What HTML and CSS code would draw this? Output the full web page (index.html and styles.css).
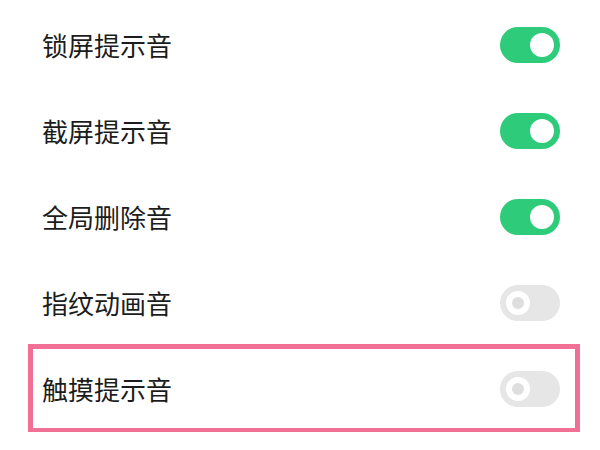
FILE: index.html
```html
<!DOCTYPE html>
<html lang="zh-CN">
<head>
<meta charset="utf-8">
<link rel="stylesheet" href="styles.css">
</head>
<body>
<div class="list">
  <div class="row"><span class="label">锁屏提示音</span><span class="switch on"><span class="knob"></span></span></div>
  <div class="row"><span class="label">截屏提示音</span><span class="switch on"><span class="knob"></span></span></div>
  <div class="row"><span class="label">全局删除音</span><span class="switch on"><span class="knob"></span></span></div>
  <div class="row"><span class="label">指纹动画音</span><span class="switch off"><span class="knob"></span></span></div>
  <div class="row highlight"><span class="label">触摸提示音</span><span class="switch off"><span class="knob"></span></span></div>
</div>
</body>
</html>
```

FILE: styles.css
```css
html, body {
  margin: 0;
  padding: 0;
  background: #ffffff;
}
.list {
  padding: 2px 20px 0 28px;
  display: flex;
  flex-direction: column;
}
.row {
  height: 86px;
  padding: 0 20px 0 14px;
  display: flex;
  align-items: center;
  justify-content: space-between;
  position: relative;
}
.label {
  font-family: "Noto Sans CJK SC", "Noto Sans", sans-serif;
  font-size: 26px;
  color: #1c1c1c;
  line-height: 1;
}
.switch {
  width: 60px;
  height: 36px;
  border-radius: 18px;
  display: flex;
  align-items: center;
  box-sizing: border-box;
  padding: 0 6px;
}
.switch.on {
  background: #2ecc7a;
  justify-content: flex-end;
}
.switch.off {
  background: #e6e6e6;
  justify-content: flex-start;
}
.knob {
  width: 24px;
  height: 24px;
  border-radius: 50%;
  background: #ffffff;
  box-sizing: border-box;
}
.switch.off .knob {
  background: #dedede;
  border: 6px solid #ffffff;
}
.highlight::after {
  content: "";
  position: absolute;
  left: 0;
  right: 0;
  top: -2px;
  bottom: -1px;
  border: 5px solid #f07096;
  pointer-events: none;
}
```
